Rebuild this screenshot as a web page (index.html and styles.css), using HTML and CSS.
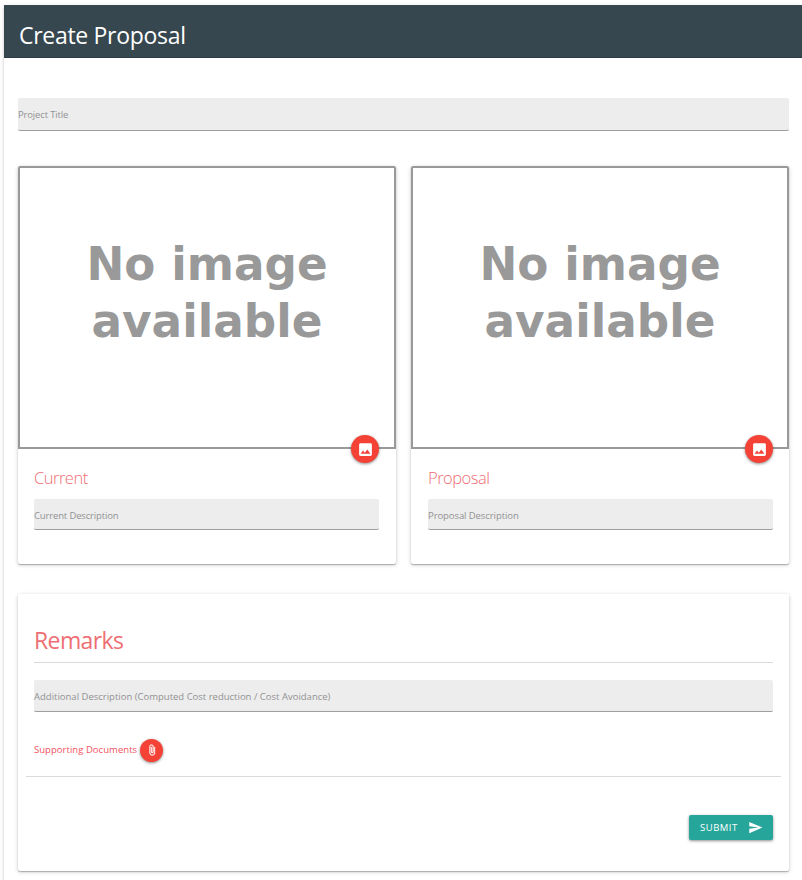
FILE: index.html
```html
<!DOCTYPE html>
<html lang="en">
<head>
<meta charset="utf-8">
<title>Create Proposal</title>
<link rel="stylesheet" href="styles.css">
</head>
<body>
<main class="panel">
  <header class="bar"><h1><span class="t-title">Create Proposal</span></h1></header>
  <div class="content">
    <div class="field field-title"><span class="t-project">Project Title</span></div>
    <div class="cards">
      <section class="card image-card">
        <div class="placeholder">
          <div class="ph-one">No image</div><div class="ph-two">available</div>
          <button class="round pick" aria-label="Choose image"><svg width="17" height="17" viewBox="0 0 24 24"><path fill="#fff" d="M21 19V5c0-1.100-.9-2-2-2H5c-1.100 0-2 .9-2 2v14c0 1.100.9 2 2 2h14c1.100 0 2-.9 2-2zM8.500 13.500l2.500 3.010L14.500 12l4.500 6H5l3.500-4.500z"/></svg></button>
        </div>
        <div class="body">
          <h3><span class="t-current">Current</span></h3>
          <div class="field"><span class="t-curdesc">Current Description</span></div>
        </div>
      </section>
      <section class="card image-card">
        <div class="placeholder">
          <div class="ph-one">No image</div><div class="ph-two">available</div>
          <button class="round pick pick-right" aria-label="Choose image"><svg width="17" height="17" viewBox="0 0 24 24"><path fill="#fff" d="M21 19V5c0-1.100-.9-2-2-2H5c-1.100 0-2 .9-2 2v14c0 1.100.9 2 2 2h14c1.100 0 2-.9 2-2zM8.500 13.500l2.500 3.010L14.500 12l4.500 6H5l3.500-4.500z"/></svg></button>
        </div>
        <div class="body body-right">
          <h3><span class="t-proposal">Proposal</span></h3>
          <div class="field"><span class="t-propdesc">Proposal Description</span></div>
        </div>
      </section>
    </div>
    <section class="card remarks">
      <h2><span class="t-remarks">Remarks</span></h2>
      <div class="field field-extra"><span class="t-extra">Additional Description (Computed Cost reduction / Cost Avoidance)</span></div>
      <div class="docs">
        <span class="t-docs">Supporting Documents</span>
        <button class="round attach" aria-label="Attach file"><svg width="12" height="12" viewBox="0 0 24 24"><path fill="#fff" stroke="#fff" stroke-width=".6" d="M16.500 6v11.500c0 2.210-1.790 4-4 4s-4-1.790-4-4V5c0-1.380 1.120-2.500 2.500-2.500s2.500 1.120 2.500 2.500v10.500c0 .55-.45 1-1 1s-1-.45-1-1V6H10v9.500c0 1.380 1.120 2.500 2.500 2.500s2.500-1.120 2.500-2.500V5c0-2.210-1.790-4-4-4S7 2.790 7 5v12.500c0 3.040 2.460 5.500 5.500 5.500s5.500-2.460 5.500-5.500V6h-1.500z"/></svg></button>
      </div>
      <div class="actions">
        <button class="submit"><span class="t-submit">SUBMIT</span><svg width="15" height="15" viewBox="0 0 24 24"><path fill="#fff" d="M2.010 21L23 12 2.010 3 2 10l15 2-15 2z"/></svg></button>
      </div>
    </section>
  </div>
</main>
</body>
</html>
```
FILE: styles.css
```css
* { box-sizing: border-box; }
html { overflow: hidden; }
body {
  margin: 0;
  padding: 5px 0 0 4px;
  background: #fff;
  font-family: "Open Sans", "Noto Sans", sans-serif;
}
h1, h2, h3 { margin: 0; font-weight: 400; }
button { border: 0; padding: 0; font-family: inherit; }
span { white-space: nowrap; }
.panel {
  height: 900px;
  background: #fff;
  box-shadow: 0 2px 2px rgba(0,0,0,.14), 0 1px 5px rgba(0,0,0,.12), 0 3px 1px -2px rgba(0,0,0,.2);
}
.bar {
  height: 53px;
  padding: 2px 0 0 15px;
  background: #37474f;
  border-bottom: 1px solid #2e3c46;
  color: #fff;
}
.bar h1 { font-size: 23px; line-height: 56px; letter-spacing: -.3px; }
.content { padding: 40px 13px 0 14px; }
.field {
  height: 31px;
  background: #ededed;
  border-bottom: 1px solid #9e9e9e;
  border-radius: 2px;
  color: #929292;
  font-size: 9.500px;
  line-height: 33px;
}
.field-title { height: 33px; }
.t-project, .t-curdesc { letter-spacing: -.15px; }
.t-propdesc { letter-spacing: -.08px; }
.cards { display: grid; grid-template-columns: 1fr 1fr; gap: 15px; margin-top: 35px; }
.card {
  background: #fff;
  border-radius: 2px;
  box-shadow: 0 1px 1px rgba(0,0,0,.24), 0 1px 4px rgba(0,0,0,.2);
}
.image-card { height: 398px; }
.placeholder {
  position: relative;
  height: 283px;
  padding-top: 68px;
  border: 2px solid #999;
  border-radius: 2px 2px 0 0;
  color: #999;
  font: bold 45.300px/57px "DejaVu Sans", sans-serif;
  text-align: center;
}
.round {
  display: flex;
  align-items: center;
  justify-content: center;
  border-radius: 50%;
  background: #f44336;
  box-shadow: 0 1px 3px rgba(0,0,0,.45);
}
.pick { position: absolute; right: 15px; bottom: -16px; width: 28px; height: 28px; }
.pick-right { right: 14px; }
.body { padding: 16px 17px 0 16px; }
.body-right { padding: 16px 16px 0 17px; }
.body h3 { height: 34px; color: #ee6e73; font-size: 16.500px; font-weight: 300; line-height: 26px; letter-spacing: -.5px; }
.remarks { height: 277px; margin-top: 30px; padding: 30px 8px 0; }
.remarks h2 {
  height: 39px;
  margin: 0 8px 17px;
  border-bottom: 1px solid #dadada;
  color: #ee6e73;
  font-size: 23px;
  line-height: 33px;
  letter-spacing: -.6px;
}
.field-extra { height: 32px; margin: 0 8px; }
.docs {
  display: flex;
  align-items: center;
  gap: 3px;
  height: 65px;
  padding: 12px 8px 0;
  border-bottom: 1px solid #dadada;
  color: #f0525f;
  font-size: 9.500px;
}
.t-docs { margin-top: -2px; letter-spacing: .04px; }
.attach { width: 23px; height: 23px; }
.actions { display: flex; justify-content: flex-end; padding: 38px 8px 0; }
.submit {
  display: flex;
  align-items: center;
  width: 84px;
  height: 25px;
  padding-left: 11px;
  gap: 11px;
  border-radius: 2px;
  background: #26a69a;
  box-shadow: 0 1px 3px rgba(0,0,0,.45);
  color: #fff;
  font-size: 9.500px;
}
.t-submit { width: 37px; letter-spacing: .5px; }
```
